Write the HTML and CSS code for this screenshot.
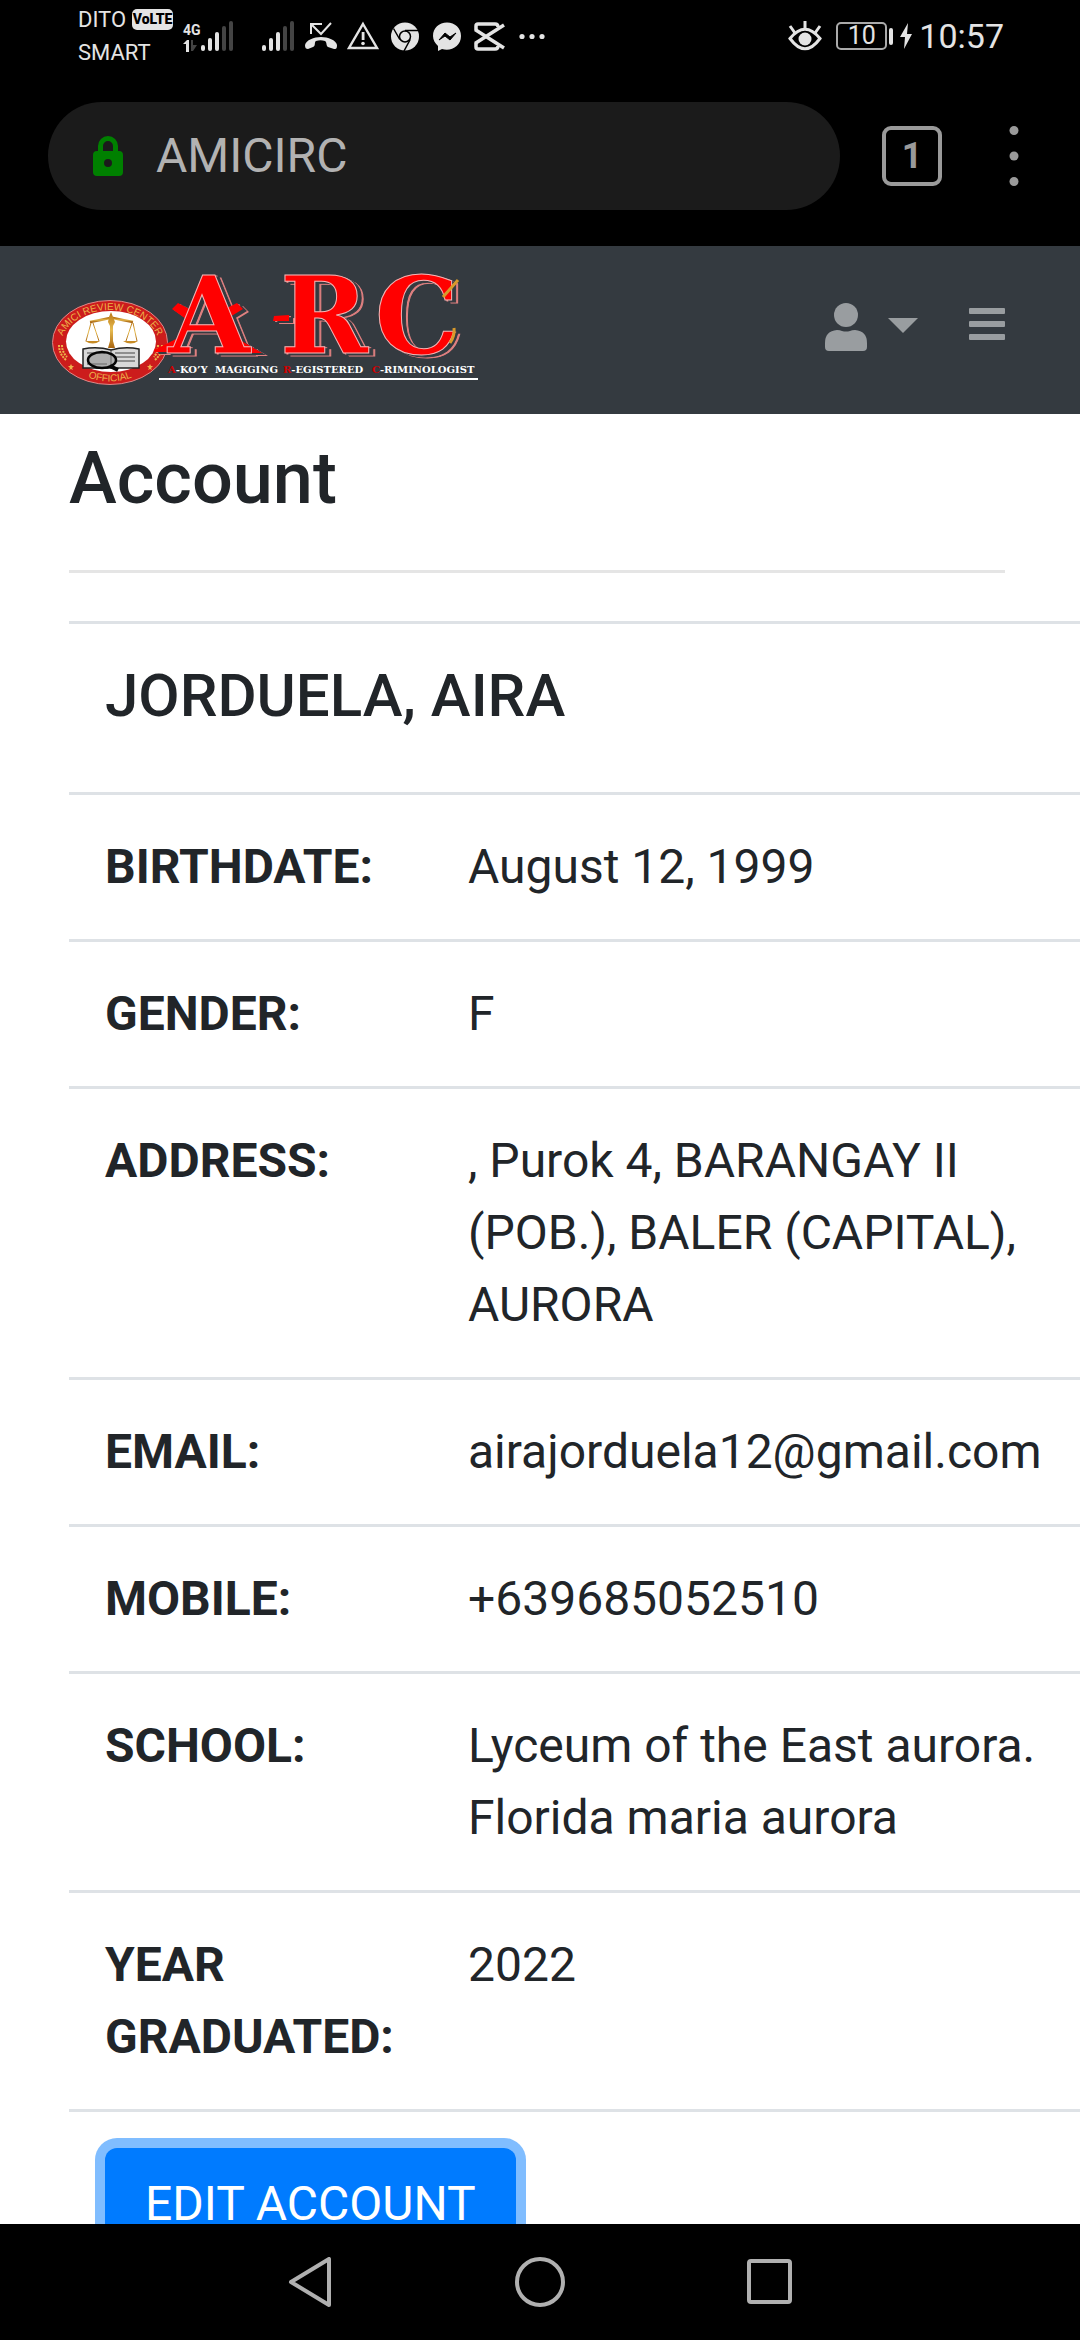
FILE: index.html
```html
<!DOCTYPE html>
<html lang="en">
<head>
<meta charset="utf-8">
<meta name="viewport" content="width=device-width, initial-scale=1">
<title>AMICIRC</title>
<link rel="stylesheet" href="styles.css">
</head>
<body>
<div class="screen">
  <header class="status">
    <div class="carriers">
      <div class="carrier">DITO <span class="volte">VoLTE</span></div>
      <div class="carrier">SMART</div>
    </div>
    <div class="network">
      <span class="network-type">4G</span>
      <svg width="14" height="12" viewBox="0 0 14 12"><path d="M0 4 4 0h2v12H3V4z" fill="#e4e4e4"/><path d="M8 0h2v5h4l-4 6H8z" fill="#444"/></svg>
    </div>
    <svg class="signal" width="34" height="32" viewBox="0 0 34 32" fill="#e4e4e4"><rect y="25" width="4" height="6" rx="2"/><rect x="7" y="18" width="4" height="13" rx="2"/><rect x="14" y="12" width="4" height="19" rx="2"/><g fill="#444"><rect x="21" y="6" width="4" height="25" rx="2"/><rect x="28" y="1" width="4" height="30" rx="2"/></g></svg>
    <svg class="signal second" width="34" height="32" viewBox="0 0 34 32" fill="#e4e4e4"><rect y="25" width="4" height="6" rx="2"/><rect x="7" y="18" width="4" height="13" rx="2"/><rect x="14" y="12" width="4" height="19" rx="2"/><g fill="#444"><rect x="21" y="6" width="4" height="25" rx="2"/><rect x="28" y="1" width="4" height="30" rx="2"/></g></svg>
    <div class="notices">
      <svg width="32" height="30" viewBox="0 0 32 30"><path d="M6 13V3h11M7 4l9 9L26 2" fill="none" stroke="#e4e4e4" stroke-width="2"/><path d="M0 24c1-5 9-8 16-8s15 3 16 8c0 4-1 4-3 4l-6-2c-2-1-1-5-3-6-3-1-6-1-9 0-2 1 0 5-3 6l-5 2c-2 0-3-1-3-4z" fill="#e4e4e4"/></svg>
      <svg width="32" height="30" viewBox="0 0 32 30"><path d="M16 3 30 27H2z" fill="none" stroke="#e4e4e4" stroke-width="2.4"/><path d="M14.700 11h2.800v8h-2.800z" fill="#e4e4e4"/><circle cx="16" cy="22.500" r="1.800" fill="#e4e4e4"/></svg>
      <svg width="32" height="30" viewBox="0 0 32 30"><circle cx="16" cy="15.500" r="14" fill="#e4e4e4"/><g fill="none" stroke="#000" stroke-width="1.500"><circle cx="16" cy="15.500" r="5.500"/><path d="M16 9.500h13M10.800 18.500 4.500 7.500M21.200 18.500 15 30"/></g></svg>
      <svg width="32" height="30" viewBox="0 0 32 30"><path d="M16 1.500C8 1.500 2 7 2 15c0 4 2 7 5 10v5l4-2c9 3 19-3 19-13 0-8-6-13.500-14-13.500z" fill="#e4e4e4"/><path d="m8 19 6-7 5 4 6-4-6 7-5-4z" fill="#000" stroke="#000"/></svg>
      <svg width="32" height="30" viewBox="0 0 32 30" fill="none" stroke="#e4e4e4" stroke-width="3.500"><path d="M3 9V5q0-2 2-2h17q3 0 3 3M3 22v4q0 2 2 2h17q3 0 3-3"/><path d="M2 8.500 31 27M2 22.500 31 4"/></svg>
      <svg width="32" height="30" viewBox="0 0 32 30" fill="#e4e4e4"><circle cx="7" cy="15.500" r="2.600"/><circle cx="17" cy="15.500" r="2.600"/><circle cx="27" cy="15.500" r="2.600"/></svg>
    </div>
    <div class="system">
      <svg width="34" height="30" viewBox="0 0 34 30"><path d="M2 17.500Q17-1 32 17.500 17 38 2 17.500z" fill="none" stroke="#e4e4e4" stroke-width="3"/><circle cx="17" cy="18" r="6.500" fill="#e4e4e4"/><path d="M17 0v8M2 5l5 7M32 5l-5 7" stroke="#e4e4e4" stroke-width="3"/></svg>
      <div class="battery"><span class="charge">10</span><span class="nub"></span></div>
      <svg width="12" height="26" viewBox="0 0 12 26"><path d="M8 0 0 14h5L4 26l8-15H7z" fill="#e4e4e4"/></svg>
      <time class="clock">10:57</time>
    </div>
  </header>

  <div class="browser">
    <button class="address" type="button">
      <svg width="30" height="40" viewBox="0 0 30 40"><path d="M7.500 18v-8a7.500 7.500 0 0 1 15 0v8" fill="none" stroke="#008000" stroke-width="5"/><path fill-rule="evenodd" d="M4 15h22q4 0 4 4v17q0 4-4 4H4q-4 0-4-4V19q0-4 4-4zm11 8a4 4 0 1 0 0 8 4 4 0 0 0 0-8z" fill="#008000"/></svg>
      <span>AMICIRC</span>
    </button>
    <button class="tabs" type="button" aria-label="Open tabs">1</button>
    <button class="more" type="button" aria-label="Menu"><svg width="10" height="60" viewBox="0 0 10 60" fill="#9a9a9a"><circle cx="5" cy="4.500" r="4.500"/><circle cx="5" cy="30" r="4.500"/><circle cx="5" cy="55.500" r="4.500"/></svg></button>
  </div>

  <nav class="topnav">
    <a class="brand" href="#" aria-label="ARC home">
      <svg class="logo" width="432" height="140" viewBox="48 260 432 140">
        <defs>
          <path id="ring-top" d="M60.500 347a49.500 37 0 0 1 99 0"/>
          <path id="ring-low" d="M62 344a48 37.500 0 0 0 96 0"/>
          <linearGradient id="gold" x1="0" y1="0" x2="0" y2="1"><stop offset="0" stop-color="#b97714"/><stop offset=".5" stop-color="#e6bb50"/><stop offset="1" stop-color="#a96510"/></linearGradient>
        </defs>
        <ellipse cx="110" cy="342.500" rx="57.500" ry="42" fill="#cc1c1c" stroke="#d88" stroke-width="1"/>
        <ellipse cx="111" cy="341.500" rx="45" ry="30.500" fill="#fff"/>
        <g class="ring-text">
          <text><textPath href="#ring-top" startOffset="50%">AMICI REVIEW CENTER</textPath></text>
          <text><textPath href="#ring-low" startOffset="50%">OFFICIAL</textPath></text>
        </g>
        <g fill="none" stroke="#edb24a" stroke-width="2" stroke-dasharray="2 1"><path d="M59 345q0 9 7 15M62 345q0 7 5 12M162 345q0 9-7 15M158 345q0 7-4 12"/></g>
        <path d="m71 364 1 2 2 0-2 2 1 2-2-1-2 1 1-2-2-2 2 0zM150 364l1 2 2 0-2 2 1 2-2-1-2 1 1-2-2-2 2 0z" fill="#edb24a"/>
        <path d="M83 349q14-3 28 1 14-4 28-1v19H83z" fill="#d8d8d8" stroke="#222" stroke-width="1.500"/>
        <path d="M111 350v17M115 353h20M115 357h20M115 361h20M87 353h18M87 364h20" stroke="#444" stroke-width="1"/>
        <g fill="none" stroke="url(#gold)"><path d="M90 322q11-2 20-4h3q9 2 20 4" stroke-width="2.500"/><path d="m91 323-5 18M93 323l6 18M132 323l-6 18M133 323l4 18" stroke-width="1"/></g>
        <path d="M109 317l2-5 2 5 2 5-2 4v15l2 7h-7l2-7v-15l-2-4z" fill="url(#gold)"/>
        <path d="M85 341h15q-7 5-15 0zM123 341h15q-7 5-15 0z" fill="#c78b25"/>
        <ellipse cx="102" cy="360" rx="14" ry="8" fill="#8888" stroke="#050505" stroke-width="2.500"/>
        <path d="m110 366 8 4" stroke="#050505" stroke-width="4"/>
        <g class="letters">
          <path d="m172 309 6-6 13 7-5 9zM237 303l6 6-18 11-4-9zM154 350l22-11v13h-21zM240 340l22 13h-22zM274 316l15-1v6h-16z" stroke="none"/>
          <text x="209" y="353">A</text><text x="324" y="353">R</text><text x="417" y="353">C</text>
        </g>
        <path d="m443 297 15-17M450 343q5-7 4-15" fill="none" stroke="#d99a2b" stroke-width="3"/>
        <g class="tagline">
          <text x="168" y="373"><tspan class="initial">A</tspan>-KO’Y</text>
          <text x="215" y="373">MAGIGING</text>
          <text x="283" y="373"><tspan class="initial">R</tspan>-EGISTERED</text>
          <text x="372" y="373"><tspan class="initial">C</tspan>-RIMINOLOGIST</text>
        </g>
        <path d="M159 379h319" stroke="#fff" stroke-width="2"/>
      </svg>
    </a>
    <div class="tools">
      <button class="tool" type="button" aria-label="User menu">
        <svg width="42" height="48" viewBox="0 0 42 48" fill="#999da0"><circle cx="21" cy="12" r="12"/><path d="M12 27q3 0 5 1 4 1 8 0 2-1 5-1 12 1 12 13v4q0 4-4 4H4q-4 0-4-4v-4q0-12 12-13z"/></svg>
        <svg width="30" height="48" viewBox="0 0 30 48"><path d="M0 15h30L15 30z" fill="#999da0"/></svg>
      </button>
      <button class="tool" type="button" aria-label="Toggle sidebar">
        <svg width="36" height="48" viewBox="0 0 36 48" fill="#999da0"><rect y="5" width="36" height="6" rx="1"/><rect y="18" width="36" height="6" rx="1"/><rect y="31" width="36" height="6" rx="1"/></svg>
      </button>
    </div>
  </nav>

  <main class="content">
    <h1>Account</h1>
    <hr>
    <table class="profile">
      <tbody>
        <tr><td colspan="2"><h2>JORDUELA, AIRA</h2></td></tr>
        <tr><th scope="row">BIRTHDATE:</th><td>August 12, 1999</td></tr>
        <tr><th scope="row">GENDER:</th><td>F</td></tr>
        <tr><th scope="row">ADDRESS:</th><td>, Purok 4, BARANGAY II (POB.), BALER (CAPITAL), AURORA</td></tr>
        <tr><th scope="row">EMAIL:</th><td>airajorduela12@gmail.com</td></tr>
        <tr><th scope="row">MOBILE:</th><td>+639685052510</td></tr>
        <tr><th scope="row">SCHOOL:</th><td>Lyceum of the East aurora. Florida maria aurora</td></tr>
        <tr><th scope="row">YEAR GRADUATED:</th><td>2022</td></tr>
        <tr><td colspan="2"><button class="edit" type="button">EDIT ACCOUNT</button></td></tr>
      </tbody>
    </table>
  </main>

  <footer class="keys">
    <button type="button" aria-label="Back"><svg width="50" height="50" viewBox="0 0 50 50"><path d="M44 2v46L6 25z" fill="none" stroke="#b0b0b0" stroke-width="4" stroke-linejoin="round"/></svg></button>
    <button type="button" aria-label="Home"><svg width="50" height="50" viewBox="0 0 50 50"><circle cx="25" cy="25" r="23" fill="none" stroke="#b0b0b0" stroke-width="4"/></svg></button>
    <button type="button" aria-label="Recent apps"><svg width="50" height="50" viewBox="0 0 50 50"><rect x="4" y="4" width="41" height="41" rx="2" fill="none" stroke="#b0b0b0" stroke-width="4"/></svg></button>
  </footer>
</div>
</body>
</html>
```

FILE: styles.css
```css
* { box-sizing: border-box; }

body {
  margin: 0;
  font-family: Roboto, "Liberation Sans", sans-serif;
  font-size: 48px;
  line-height: 72px;
  color: #212529;
  background: #fff;
}

button {
  margin: 0;
  padding: 0;
  border: 0;
  background: none;
  color: inherit;
  font: inherit;
}

svg { display: block; flex: none; }

.screen {
  display: flex;
  flex-direction: column;
  height: 100vh;
  overflow: hidden;
}

/* Status bar */
.status {
  display: flex;
  flex: none;
  align-items: center;
  height: 72px;
  padding: 0 76px 0 78px;
  background: #000;
  color: #e4e4e4;
}

.carriers { width: 105px; }

.carrier {
  display: flex;
  align-items: center;
  gap: 6px;
  font-size: 22px;
  line-height: 33px;
}

.volte {
  width: 41px;
  border-radius: 5px;
  background: #e4e4e4;
  color: #000;
  font-size: 14px;
  font-weight: 900;
  line-height: 21px;
  text-align: center;
}

.network { width: 18px; }

.network-type {
  display: block;
  font-size: 14px;
  font-weight: 700;
  line-height: 20px;
}

.signal.second { margin-left: 27px; }

.notices {
  display: flex;
  gap: 10px;
  margin-left: 9px;
}

.system {
  display: flex;
  align-items: center;
  gap: 7px;
  margin-left: auto;
}

.battery {
  display: flex;
  align-items: center;
  gap: 2px;
  margin-left: 7px;
}

.charge {
  width: 51px;
  border: 2px solid #aaa;
  border-radius: 5px;
  font-size: 25px;
  line-height: 24px;
  text-align: center;
}

.nub {
  width: 4px;
  height: 17px;
  border-radius: 2px;
  background: #e4e4e4;
}

.clock {
  font-size: 34px;
  line-height: 40px;
}

/* Browser toolbar */
.browser {
  display: flex;
  flex: none;
  align-items: center;
  padding: 30px 61px 36px 48px;
  background: #000;
}

.address {
  display: flex;
  flex: 1;
  align-items: center;
  gap: 33px;
  height: 108px;
  padding-left: 45px;
  border-radius: 54px;
  background: #1b1b1b;
  color: #b2b2b2;
}

.tabs {
  width: 60px;
  height: 60px;
  margin: 0 67px 0 42px;
  border: 4px solid #9a9a9a;
  border-radius: 9px;
  color: #9a9a9a;
  font-size: 36px;
  font-weight: 700;
  line-height: 52px;
}

/* Site navigation */
.topnav {
  display: flex;
  flex: none;
  align-items: center;
  justify-content: space-between;
  padding: 14px 75px 14px 48px;
  background: #343a40;
}

.logo { overflow: visible; }

.ring-text {
  fill: #edb24a;
  font-family: "Liberation Sans", sans-serif;
  font-size: 10px;
  text-anchor: middle;
}

.letters {
  fill: #f00;
  stroke: #f5b5b5;
  stroke-width: 1px;
  font-family: "DejaVu Serif", serif;
  font-size: 106px;
  font-weight: 700;
  text-anchor: middle;
  filter: drop-shadow(4px 2px 0 #343a40) drop-shadow(2px 1px 0 #e08080);
}

.tagline {
  fill: #fff;
  font-family: "DejaVu Serif", serif;
  font-size: 10px;
  font-weight: 700;
}

.initial { fill: #d00000; }

.tools {
  display: flex;
  gap: 51px;
  padding-bottom: 6px;
}

.tool {
  display: flex;
  gap: 21px;
}

/* Account page */
.content {
  flex: 1;
  min-height: 0;
  overflow: hidden;
  padding: 22px 0 0 69px;
}

h1 {
  margin: 0;
  font-size: 72px;
  font-weight: 500;
  line-height: 86px;
}

hr {
  height: 3px;
  margin: 48px 75px 48px 0;
  border: 0;
  background: #e5e5e5;
}

.profile {
  width: 100%;
  border-spacing: 0;
}

.profile th,
.profile td {
  padding: 36px;
  border-top: 3px solid #dee2e6;
  text-align: left;
  vertical-align: top;
}

.profile th {
  width: 363px;
  font-weight: 700;
}

.profile td { padding-right: 4px; }

h2 {
  margin: 0 0 24px;
  font-size: 60px;
  font-weight: 500;
  line-height: 72px;
}

.edit {
  display: block;
  padding: 18px 40px;
  border-radius: 12px;
  background: #007bff;
  box-shadow: 0 0 0 10px #80bdff;
  color: #fff;
  line-height: 76px;
}

/* Android navigation keys */
.keys {
  display: flex;
  flex: none;
  justify-content: center;
  height: 116px;
  background: #000;
}

.keys button {
  display: flex;
  align-items: center;
  justify-content: center;
  width: 230px;
}
```
